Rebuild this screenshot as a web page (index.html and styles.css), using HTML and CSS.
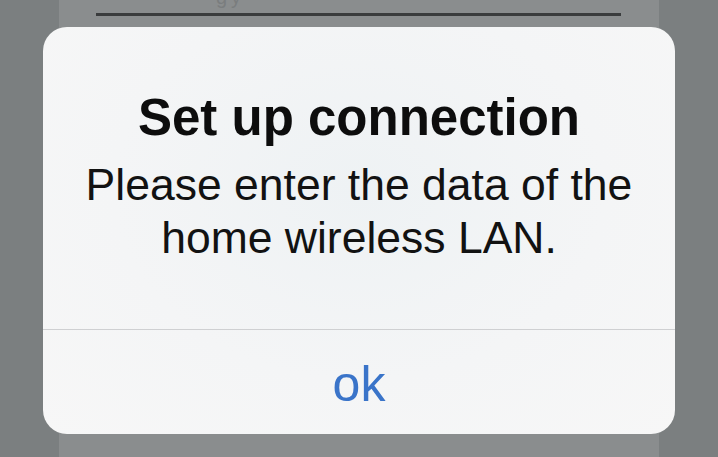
FILE: index.html
```html
<!DOCTYPE html>
<html lang="en">
<head>
    <meta charset="UTF-8" />
    <meta name="viewport" content="width=device-width, initial-scale=1.0" />
    <title>Set up connection</title>
    <link rel="stylesheet" href="styles.css">
</head>
<body>
    <!-- Page behind the alert -->
    <div class="backdrop">
        <div class="field">
            <span class="field-value">gy</span>
        </div>
    </div>

    <!-- Alert -->
    <div class="alert">
        <div class="alert-body">
            <h1 class="alert-title">Set up connection</h1>
            <p class="alert-text">Please enter the data of the home wireless LAN.</p>
        </div>
        <button class="alert-btn">ok</button>
    </div>
</body>
</html>
```

FILE: styles.css
```css
/* Base */
body {
    margin: 0;
    height: 457px;
    overflow: hidden;
    background: #7b7f80;
    font-family: 'Liberation Sans', Arial, sans-serif;
}

/* Page behind */
.backdrop {
    margin: 0 59px;
    height: 100%;
    background: #8a8d8e;
    padding-top: 1px;
    box-sizing: border-box;
}

.field {
    margin: 0 38px 0 37px;
    height: 12px;
    border-bottom: 3px solid #3a3c3d;
    display: flex;
    align-items: flex-start;
}

.field-value {
    margin-left: 120px;
    margin-top: -14px;
    font-size: 20px;
    line-height: 20px;
    letter-spacing: 4px;
    color: #7a7d7e;
}

/* Alert */
.alert {
    position: absolute;
    left: 43px;
    top: 27px;
    width: 632px;
    height: 407px;
    border-radius: 24px;
    background: radial-gradient(ellipse at 50% 40%, #eef2f4 0%, #f4f5f6 55%, #f7f7f7 100%);
    display: flex;
    flex-direction: column;
    overflow: hidden;
}

.alert-body {
    height: 303px;
    padding: 61px 24px 0;
    box-sizing: border-box;
    text-align: center;
    border-bottom: 1px solid #cfd0d2;
}

.alert-title {
    margin: 0;
    font-size: 51px;
    line-height: 60px;
    font-weight: bold;
    color: #0d0d0d;
}

.alert-text {
    margin: 10px 0 0;
    font-size: 44.5px;
    line-height: 53px;
    color: #121212;
}

.alert-btn {
    flex: 1;
    border: none;
    background: transparent;
    padding: 4px 0 0;
    font-family: 'Liberation Sans', Arial, sans-serif;
    font-size: 50px;
    line-height: 60px;
    color: #3a74c9;
    cursor: pointer;
}
```
